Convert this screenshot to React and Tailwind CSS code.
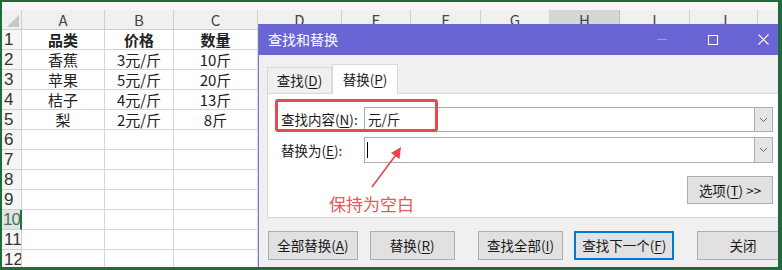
import React from "react";

const font = { fontFamily: '"Noto Sans CJK SC", "Liberation Sans", sans-serif' };

const letters = ["A", "B", "C", "D", "E", "F", "G", "H", "I", "J", ""];

const rows = [
  ["品类", "价格", "数量"],
  ["香蕉", "3元/斤", "10斤"],
  ["苹果", "5元/斤", "20斤"],
  ["桔子", "4元/斤", "13斤"],
  ["梨", "2元/斤", "8斤"],
];

function Chevron() {
  return (
    <div className="w-[18px] h-full bg-[#e5e5e5] border-l border-[#adadad] flex items-center justify-center">
      <svg width="9" height="6" viewBox="0 0 9 6">
        <polyline points="1,1 4.5,4.5 8,1" fill="none" stroke="#666" strokeWidth="1" />
      </svg>
    </div>
  );
}

function Key({ children }) {
  return <span className="underline underline-offset-2">{children}</span>;
}

function Sheet() {
  return (
    <div className="flex flex-col">
      <div className="h-[8px] bg-[#f6f6f6]" />
      <div className="grid grid-cols-[20px_83px_69px_84px_84px_69px_70px_69px_70px_70px_68px_60px] h-[20px] bg-[#f0f0f0] text-[15px] text-[#444]">
        <div className="relative border-r border-b border-[#cfcfcf]">
          <svg className="absolute right-[2px] bottom-[2px]" width="12" height="12" viewBox="0 0 12 12">
            <polygon points="12,0 12,12 0,12" fill="#c8c8c8" />
          </svg>
        </div>
        {letters.map((l, i) => (
          <div
            key={i}
            className={
              l === "H"
                ? "border-r border-b border-[#bdbdbd] bg-[#d6d6d6] flex items-center justify-center leading-none"
                : "border-r border-b border-[#cfcfcf] flex items-center justify-center leading-none"
            }
          >
            {l}
          </div>
        ))}
      </div>
      {Array.from({ length: 12 }).map((_, r) => (
        <div
          key={r}
          className="grid grid-cols-[20px_83px_69px_84px_84px_69px_70px_69px_70px_70px_68px_60px] h-[20px] text-[15px] text-[#222]"
        >
          <div
            className={
              r === 9
                ? "border-r-2 border-r-[#217346] border-b border-b-[#cfcfcf] bg-[#e3e3e3] text-[#3d7a55] text-[17px] leading-[20px] pl-[1px] overflow-hidden whitespace-nowrap"
                : "border-r border-b border-[#cfcfcf] bg-[#f6f6f6] text-[#333] text-[17px] leading-[20px] pl-[2px] overflow-hidden"
            }
            style={{ fontFamily: '"Liberation Sans", sans-serif', letterSpacing: r === 9 ? "-1px" : undefined }}
          >
            {r + 1}
          </div>
          {letters.map((_, c) => (
            <div
              key={c}
              className={
                r === 0
                  ? "border-r border-b border-[#d6d6d6] flex items-center justify-center font-bold leading-none"
                  : "border-r border-b border-[#d6d6d6] flex items-center justify-center leading-none"
              }
            >
              {rows[r] && rows[r][c]}
            </div>
          ))}
        </div>
      ))}
    </div>
  );
}

function Dialog() {
  return (
    <div className="absolute left-[256px] top-[22px] w-[531px] h-[260px] bg-[#f0f0f0] border-l border-[#7c78da] flex flex-col text-[13.5px] text-[#1a1a1a]">
      <div className="h-[31px] bg-[#6a65d5] flex items-center text-white shrink-0">
        <div className="pl-[9px] text-[14px]">查找和替换</div>
        <div className="ml-auto flex h-full">
          <div className="w-[51px] flex items-center justify-center">
            <div className="w-[10px] h-px bg-[#9d9ae6]" />
          </div>
          <div className="w-[51px] flex items-center justify-center">
            <div className="w-[10px] h-[10px] border border-white" />
          </div>
          <div className="w-[51px] flex items-center justify-center">
            <svg width="11" height="11" viewBox="0 0 11 11">
              <path d="M0.5 0.5 L10.5 10.5 M10.5 0.5 L0.5 10.5" stroke="white" strokeWidth="1.1" />
            </svg>
          </div>
        </div>
      </div>

      <div className="flex items-end pl-[8px] mt-[9px] h-[29px] shrink-0">
        <div className="w-[65px] h-[26px] border border-b-0 border-[#d9d9d9] bg-[#f0f0f0] flex items-center justify-center">
          查找(<Key>D</Key>)
        </div>
        <div className="w-[66px] h-[30px] -mb-px border border-b-0 border-[#d9d9d9] bg-white flex items-center justify-center relative z-10">
          替换(<Key>P</Key>)
        </div>
      </div>

      <div className="ml-[8px] w-[513px] h-[125px] bg-white border border-[#d9d9d9] flex flex-col pt-[13px] shrink-0 relative">
        <div className="flex items-center h-[25px]">
          <div className="w-[96px] pl-[13px]">
            查找内容(<Key>N</Key>):
          </div>
          <div className="w-[409px] h-[25px] border border-[#adadad] bg-white flex">
            <div className="flex-1 pl-[3px] leading-[23px]">元/斤</div>
            <Chevron />
          </div>
        </div>
        <div className="flex items-center h-[26px] mt-[5px]">
          <div className="w-[96px] pl-[13px]">
            替换为(<Key>E</Key>):
          </div>
          <div className="w-[409px] h-[26px] border border-[#adadad] bg-white flex">
            <div className="flex-1 pl-[2px] flex items-center">
              <div className="w-px h-[16px] bg-black" />
            </div>
            <Chevron />
          </div>
        </div>
        <div className="flex justify-end pr-[6px] mt-[13px]">
          <div className="w-[86px] h-[28px] bg-[#e1e1e1] border border-[#adadad] flex items-center justify-center">
            选项(<Key>T</Key>)&nbsp;&gt;&gt;
          </div>
        </div>
      </div>

      <div className="flex pl-[9px] mt-[13px] h-[29px] shrink-0">
        <div className="w-[90px] h-full bg-[#e1e1e1] border border-[#adadad] flex items-center justify-center">
          全部替换(<Key>A</Key>)
        </div>
        <div className="w-[85px] ml-[12px] h-full bg-[#e1e1e1] border border-[#adadad] flex items-center justify-center">
          替换(<Key>R</Key>)
        </div>
        <div className="w-[86px] ml-[23px] h-full bg-[#e1e1e1] border border-[#adadad] flex items-center justify-center">
          查找全部(<Key>I</Key>)
        </div>
        <div className="w-[100px] ml-[11px] h-full bg-[#e1e1e1] border-2 border-[#0078d7] flex items-center justify-center">
          查找下一个(<Key>F</Key>)
        </div>
        <div className="w-[92px] ml-[23px] h-full bg-[#e1e1e1] border border-[#adadad] flex items-center justify-center">
          关闭
        </div>
      </div>
    </div>
  );
}

export default function App() {
  return (
    <div
      className="w-[782px] h-[270px] border-t-2 border-l-2 border-r-4 border-b-3 border-[#1f6b3d] bg-white overflow-hidden relative"
      style={font}
    >
      <Sheet />
      <Dialog />
      {/* annotations */}
      <div className="absolute left-[273px] top-[97px] w-[163px] h-[33px] border-[3px] border-[#e84a52] rounded-[3px] pointer-events-none" />
      <svg className="absolute left-[360px] top-[140px]" width="50" height="50" viewBox="0 0 50 50">
        <line x1="10" y1="45" x2="36" y2="10" stroke="#e8474f" strokeWidth="1.6" />
        <polygon points="39,5 37.5,17 29,11" fill="#e8474f" />
      </svg>
      <div className="absolute left-[327px] top-[190px] text-[17px] text-[#e8555a] leading-[24px]">
        保持为空白
      </div>
    </div>
  );
}
